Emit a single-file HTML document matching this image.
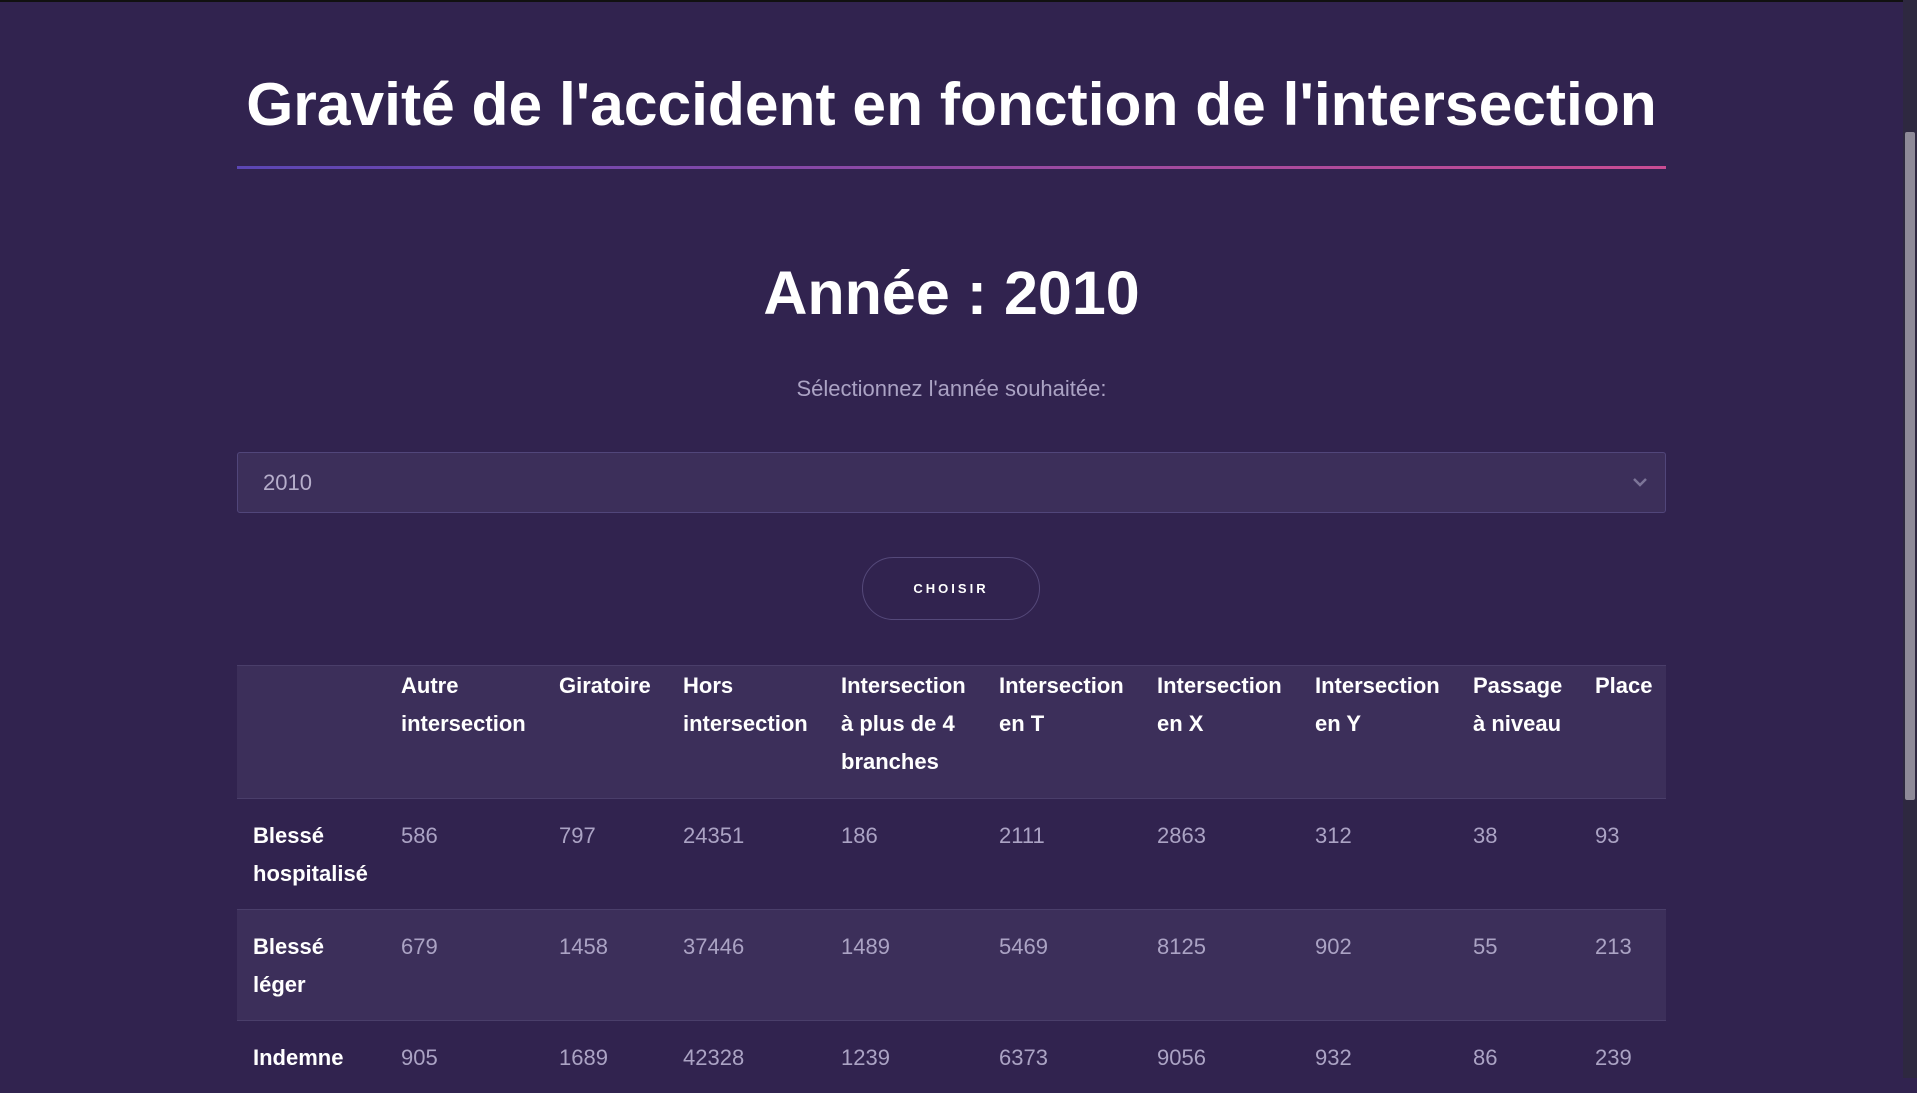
<!DOCTYPE html>
<html><head><meta charset="utf-8"><style>
*{box-sizing:border-box;margin:0;padding:0}
html,body{width:1917px;height:1078px;overflow:hidden;background:#31234f;font-family:"Liberation Sans",Arial,sans-serif;color:#fff}
.topline{position:absolute;left:0;top:0;width:1903px;height:2px;background:#111}
.sb{position:absolute;right:0;top:0;width:14px;height:1078px;background:#2e2840}
.thumb{position:absolute;right:2px;top:132px;width:10px;height:668px;background:#8e8a98;border-radius:2px}
.wrap{position:absolute;left:237px;width:1429px;top:0}
h1{position:absolute;top:68px;left:0;width:1429px;text-align:center;font-size:60.5px;font-weight:bold;line-height:72px}
.grad{position:absolute;top:166px;left:0;width:1429px;height:3px;background:linear-gradient(90deg,#5b46b4,#c94c93)}
h2{position:absolute;top:257px;left:0;width:1429px;text-align:center;font-size:61px;font-weight:bold;line-height:72px}
.lbl{position:absolute;top:376px;left:0;width:1429px;text-align:center;font-size:22px;color:#aba3c4}
.sel{position:absolute;top:452px;left:0;width:1429px;height:61px;background:#3c2f5a;border:1px solid #51467a;border-radius:3px;font-size:22px;color:#b6aecb;padding:17px 25px}
.chev{position:absolute;right:16px;top:21px}
.btn{position:absolute;top:557px;left:625px;width:178px;height:63px;border:1px solid #55497a;border-radius:32px;text-align:center;line-height:61px;font-size:13px;letter-spacing:3px;font-weight:bold}
table{position:absolute;top:665px;left:0;width:1429px;border-collapse:collapse;table-layout:fixed;font-size:22px}
th{text-align:left;vertical-align:top;padding:1px 16px 17px;line-height:38px;font-weight:bold;background:#3c2f5a}
td{vertical-align:top;padding:18px 16px 16px;line-height:38px;color:#aba3c4}
td.h{color:#fff;font-weight:bold}
tr{border-top:1px solid #4a3e6a}
tr.alt td{background:#3c2f5a}
</style></head><body>
<div class="topline"></div>
<div class="wrap">
<h1>Gravité de l'accident en fonction de l'intersection</h1>
<div class="grad"></div>
<h2>Année : 2010</h2>
<div class="lbl">Sélectionnez l'année souhaitée:</div>
<div class="sel">2010<svg class="chev" width="18" height="16" viewBox="0 0 18 16"><path d="M3 5l6 6 6-6" stroke="#7d7598" stroke-width="2.5" fill="none"/></svg></div>
<div class="btn">CHOISIR</div>
<table>
<colgroup><col style="width:148px"><col style="width:158px"><col style="width:124px"><col style="width:158px"><col style="width:158px"><col style="width:158px"><col style="width:158px"><col style="width:158px"><col style="width:122px"><col></colgroup>
<tr><th></th><th>Autre intersection</th><th>Giratoire</th><th>Hors intersection</th><th>Intersection à plus de 4 branches</th><th>Intersection en T</th><th>Intersection en X</th><th>Intersection en Y</th><th>Passage à niveau</th><th>Place</th></tr>
<tr><td class="h">Blessé hospitalisé</td><td>586</td><td>797</td><td>24351</td><td>186</td><td>2111</td><td>2863</td><td>312</td><td>38</td><td>93</td></tr>
<tr class="alt"><td class="h">Blessé léger</td><td>679</td><td>1458</td><td>37446</td><td>1489</td><td>5469</td><td>8125</td><td>902</td><td>55</td><td>213</td></tr>
<tr><td class="h">Indemne</td><td>905</td><td>1689</td><td>42328</td><td>1239</td><td>6373</td><td>9056</td><td>932</td><td>86</td><td>239</td></tr>
</table>
</div>
<div class="sb"><div class="thumb"></div></div>
</body></html>
